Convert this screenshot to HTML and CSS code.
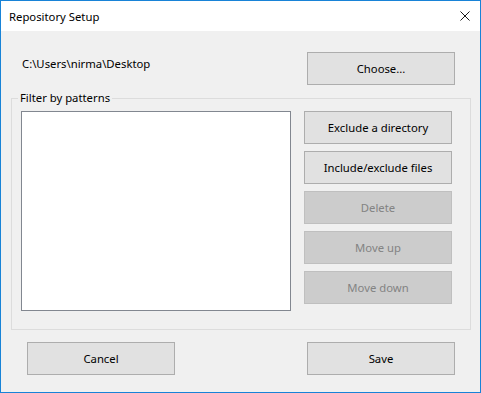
FILE: index.html
```html
<!DOCTYPE html>
<html lang="en">
<head>
    <meta charset="UTF-8">
    <title>Repository Setup</title>
    <link rel="stylesheet" href="styles.css">
</head>
<body>
    <div class="window">
        <div class="titlebar">
            <span class="title">Repository Setup</span>
            <svg class="close" width="11" height="11" viewBox="0 0 11 11">
                <path d="M0.5 0.5 L10.5 10.5 M10.5 0.5 L0.5 10.5" stroke="#000" stroke-width="1" fill="none"/>
            </svg>
        </div>

        <div class="content">
            <div class="top-row">
                <span class="path">C:\Users\nirma\Desktop</span>
                <button class="button">Choose...</button>
            </div>

            <fieldset class="group">
                <legend>Filter by patterns</legend>
                <div class="group-body">
                    <div class="listbox"></div>
                    <div class="actions">
                        <button class="button">Exclude a directory</button>
                        <button class="button">Include/exclude files</button>
                        <button class="button" disabled>Delete</button>
                        <button class="button" disabled>Move up</button>
                        <button class="button" disabled>Move down</button>
                    </div>
                </div>
            </fieldset>

            <div class="footer">
                <button class="button">Cancel</button>
                <button class="button">Save</button>
            </div>
        </div>
    </div>
</body>
</html>
```

FILE: styles.css
```css
body {
    margin: 0;
    font-family: 'Noto Sans', 'Open Sans', sans-serif;
    font-size: 11.3px;
    color: #000000;
}
.window {
    width: 481px;
    height: 393px;
    box-sizing: border-box;
    border: 1px solid #1883d7;
    display: flex;
    flex-direction: column;
}
.titlebar {
    height: 30px;
    background-color: #ffffff;
    display: flex;
    align-items: center;
    justify-content: space-between;
    padding: 0 10px 0 8px;
}
.close {
    display: block;
    width: 10px;
    height: 10px;
}
.content {
    flex: 1;
    background-color: #f0f0f0;
    padding: 21px 9px 0 10px;
}
.top-row {
    display: flex;
    justify-content: space-between;
    align-items: flex-start;
}
.path {
    margin-left: 11px;
    margin-top: 4px;
}
.top-row .button {
    margin-right: 16px;
}
.button {
    width: 148px;
    height: 33px;
    box-sizing: border-box;
    background-color: #e1e1e1;
    border: 1px solid #adadad;
    border-radius: 0;
    font: inherit;
    color: #000000;
    padding: 0;
}
.button:disabled {
    background-color: #cccccc;
    border-color: #bfbfbf;
    color: #838383;
}
.group {
    margin: 5px 0 0 0;
    border: 1px solid #dcdcdc;
    padding: 5px 18px 18px 9px;
}
.group legend {
    padding: 0 2px;
    margin-left: -3px;
    line-height: 16px;
}
.group-body {
    display: flex;
    gap: 13px;
}
.listbox {
    width: 270px;
    height: 200px;
    box-sizing: border-box;
    border: 1px solid #828790;
    background-color: #ffffff;
}
.actions {
    display: flex;
    flex-direction: column;
    gap: 7px;
}
.footer {
    display: flex;
    justify-content: space-between;
    margin-top: 12px;
    padding: 0 16px 0 16px;
}
```
